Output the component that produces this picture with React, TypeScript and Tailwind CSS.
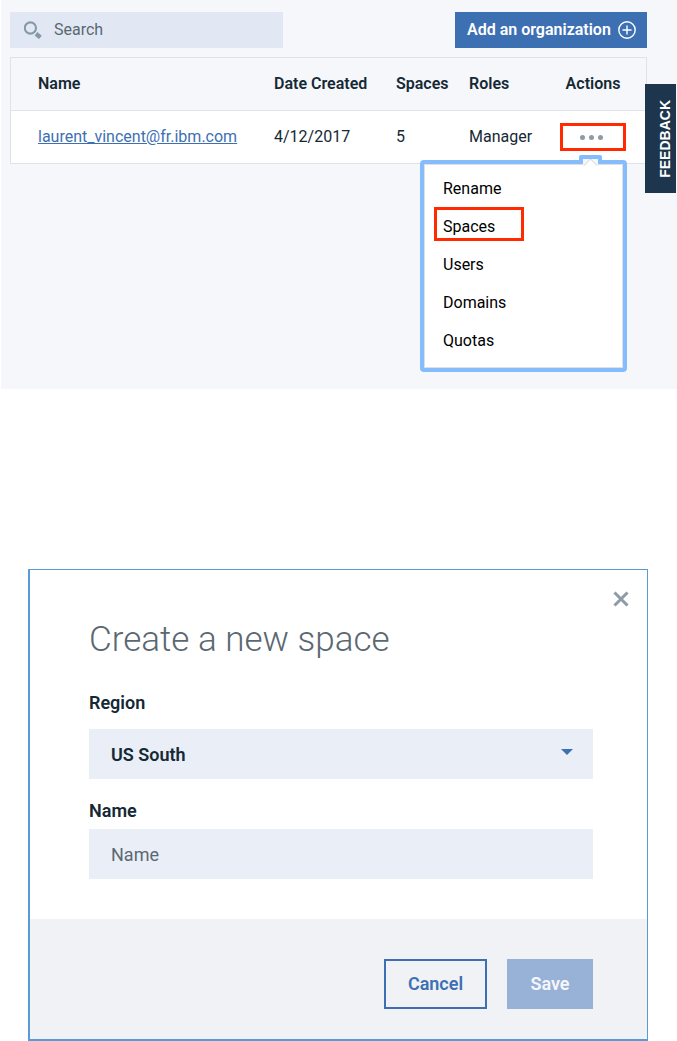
import { useState } from 'react';

const MENU_ITEMS = ['Rename', 'Spaces', 'Users', 'Domains', 'Quotas'];

function SearchIcon() {
  return (
    <svg className="w-[18px] h-[18px] shrink-0" viewBox="0 0 18 18" fill="none" stroke="#8799a9" aria-hidden="true">
      <circle cx="6.4" cy="7" r="5.6" strokeWidth="2.1" />
      <path d="M12 12.8l4.4 3.6" strokeWidth="4.4" />
    </svg>
  );
}

function PlusCircleIcon() {
  return (
    <svg className="w-[18px] h-[18px] shrink-0" viewBox="0 0 18 18" fill="none" stroke="#fff" strokeWidth="1.4" aria-hidden="true">
      <circle cx="9" cy="9" r="8.2" />
      <path d="M9 4.5v9M4.5 9h9" />
    </svg>
  );
}

function ActionsMenu() {
  return (
    <div className="absolute right-[19px] top-[49px] z-10 w-[207px] rounded border-4 border-[#85bcfc] text-left">
      <ul className="border border-[#dcdfe4] bg-white pt-[5px] pb-[7px]">
        {MENU_ITEMS.map((item) => (
          <li key={item} className="relative h-[38px]">
            <button type="button" className="h-full w-full pl-[18px] text-left text-black">
              {item}
            </button>
            {item === 'Spaces' && (
              <span className="pointer-events-none absolute left-[9px] -top-px h-[34px] w-[90px] border-[3px] border-[#ff2a00]" />
            )}
          </li>
        ))}
      </ul>
      {/* pointer under the dots */}
      <svg className="absolute right-[21px] -top-[9px] h-[11px] w-[23px]" viewBox="0 0 23 11" aria-hidden="true">
        <path d="M0 9V2Q0 0 2 0H21Q23 0 23 2V9Z" fill="#85bcfc" />
        <path d="M4 11V4H19V11Z" fill="#f5f7fb" />
        <path d="M5 10.5L11.5 4L18 10.5" fill="#fff" stroke="#ccd1d8" />
      </svg>
    </div>
  );
}

function Organizations() {
  const [query, setQuery] = useState('');
  const [menuOpen, setMenuOpen] = useState(true);

  return (
    <section className="relative ml-px bg-[#f5f7fb] pl-[9px] pr-[30px] pt-3 pb-[225px]">
      <div className="flex items-center justify-between">
        <label className="flex h-9 w-[273px] items-center gap-3 bg-[#e1e8f4] px-3.5">
          <SearchIcon />
          <input
            type="text"
            aria-label="Search"
            value={query}
            onChange={(e) => setQuery(e.target.value)}
            placeholder="Search"
            className="min-w-0 flex-1 bg-transparent outline-none placeholder:text-[#5a6872]"
          />
        </label>
        <button type="button" className="flex h-9 w-[192px] items-center justify-between bg-[#3d70b2] pl-3 pr-[11px] font-semibold text-white">
          Add an organization
          <PlusCircleIcon />
        </button>
      </div>

      <table className="mt-[9px] w-full table-fixed border-separate border-spacing-0 border border-[#dfe3e6] text-left">
        <thead>
          <tr className="h-[53px]">
            <th className="border-b border-[#dfe3e6] pl-[27px] font-semibold">Name</th>
            <th className="w-[122px] border-b border-[#dfe3e6] font-semibold">Date Created</th>
            <th className="w-[73px] border-b border-[#dfe3e6] font-semibold">Spaces</th>
            <th className="w-[91px] border-b border-[#dfe3e6] font-semibold">Roles</th>
            <th className="w-[86px] border-b border-[#dfe3e6] pr-5 text-center font-semibold">Actions</th>
          </tr>
        </thead>
        <tbody className="bg-white">
          <tr className="h-[52px]">
            <td className="pl-[27px]">
              <a href="#org" className="text-[#3d70b2] underline">laurent_vincent@fr.ibm.com</a>
            </td>
            <td>4/12/2017</td>
            <td>5</td>
            <td>Manager</td>
            <td className="relative pr-5">
              <button
                type="button"
                aria-label="Actions"
                onClick={() => setMenuOpen(!menuOpen)}
                className="flex h-7 w-full items-center justify-center gap-1 border-[3px] border-[#ff2a00] pr-1"
              >
                <span className="h-[5px] w-[5px] rounded-full bg-[#8c9ba5]" />
                <span className="h-[5px] w-[5px] rounded-full bg-[#8c9ba5]" />
                <span className="h-[5px] w-[5px] rounded-full bg-[#8c9ba5]" />
              </button>
              {menuOpen && <ActionsMenu />}
            </td>
          </tr>
        </tbody>
      </table>

      <button
        type="button"
        className="absolute right-px top-[84px] z-20 flex h-[109px] w-[31px] items-center justify-center bg-[#1d364d] pl-2 text-sm font-bold text-white"
      >
        <span className="rotate-180 font-['Liberation_Sans',sans-serif] [writing-mode:vertical-rl]">FEEDBACK</span>
      </button>
    </section>
  );
}

function CreateSpaceDialog() {
  const [name, setName] = useState('');

  return (
    <form
      role="dialog"
      aria-labelledby="dialog-title"
      onSubmit={(e) => e.preventDefault()}
      className="relative ml-7 mr-[29px] mt-[180px] border border-b-2 border-l-2 border-[#5b9bd5] bg-white"
    >
      <button type="button" aria-label="Close" className="absolute right-[18px] top-[21px]">
        <svg className="h-4 w-4" viewBox="0 0 16 16" stroke="#8c9ba5" strokeWidth="3" aria-hidden="true">
          <path d="M1.5 1.5l13 13M14.5 1.5l-13 13" />
        </svg>
      </button>

      <div className="flex flex-col pl-[59px] pr-[54px] pt-12 pb-10 text-lg">
        <h2 id="dialog-title" className="text-[35px]/[44px] font-light text-[#5a6872]">Create a new space</h2>

        <label htmlFor="region" className="mt-[27px] font-semibold">Region</label>
        <div className="relative mt-3">
          <select id="region" className="h-[50px] w-full appearance-none bg-[#eaeef7] px-[22px] pt-0.5 font-semibold outline-none">
            <option>US South</option>
          </select>
          <svg className="pointer-events-none absolute right-5 top-5 h-1.5 w-3" viewBox="0 0 12 6" fill="#3d70b2" aria-hidden="true">
            <path d="M0 0h12L6 6z" />
          </svg>
        </div>

        <label htmlFor="name" className="mt-[18px] font-semibold">Name</label>
        <input
          id="name"
          type="text"
          value={name}
          onChange={(e) => setName(e.target.value)}
          placeholder="Name"
          className="mt-1 h-[50px] bg-[#eaeef7] px-[22px] outline-none placeholder:text-[#5a6872]"
        />
      </div>

      <div className="flex justify-end gap-5 bg-[#f0f2f6] pt-10 pr-[54px] pb-[30px] text-lg font-semibold">
        <button type="button" className="h-[50px] w-[103px] border-2 border-[#3d70b2] text-[#3d70b2]">Cancel</button>
        <button type="submit" className="h-[50px] w-[86px] bg-[#98b1d7] text-[#f5f7fb]">Save</button>
      </div>
    </form>
  );
}

function App() {
  return (
    <main className="bg-white font-['Roboto',sans-serif] text-base text-[#152935]">
      <Organizations />
      <CreateSpaceDialog />
    </main>
  );
}

export default App;
